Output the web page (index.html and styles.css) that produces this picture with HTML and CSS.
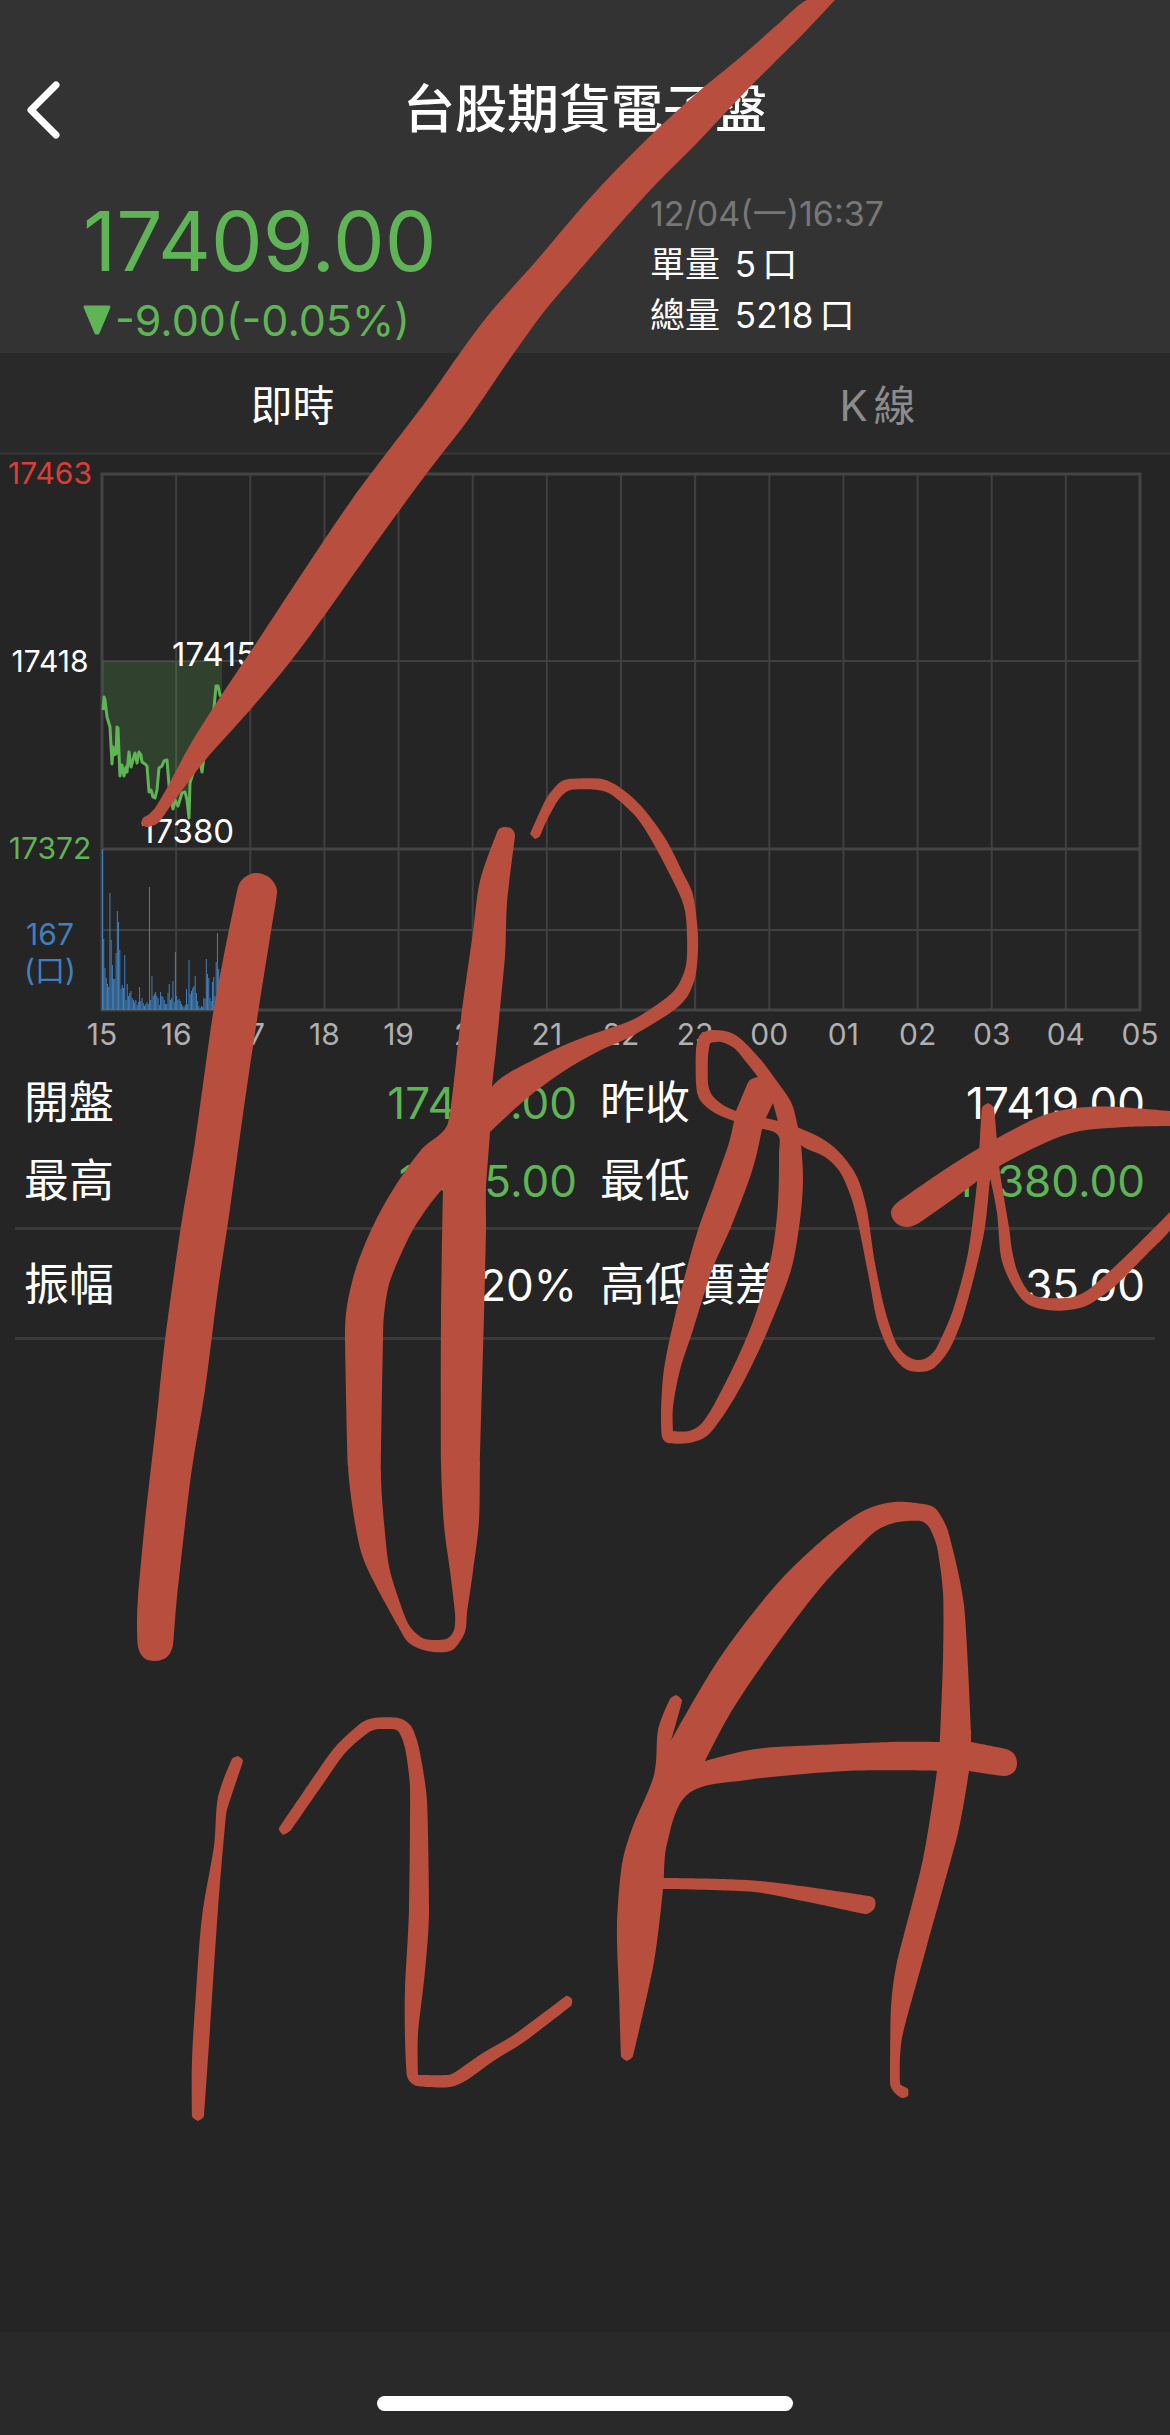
FILE: index.html
```html
<!DOCTYPE html>
<html lang="zh-Hant">
<head>
    <meta charset="UTF-8">
    <meta name="viewport" content="width=device-width, initial-scale=1">
    <title>台股期貨電子盤</title>
    <link rel="stylesheet" href="styles.css">
</head>
<body>
    <header class="header">
        <div class="nav">
            <button class="back" type="button" aria-label="返回">
                <svg viewBox="0 0 34 58" width="34" height="58"><path d="M29 4L4 29L29 54"/></svg>
            </button>
            <h1>台股期貨電子盤</h1>
        </div>
        <div class="quote">
            <div class="quote-price">
                <div class="price">17409.00</div>
                <div class="change"><svg viewBox="0 0 28 30" width="28" height="30"><path d="M2 2H26L15 28H13Z"/></svg>-9.00(-0.05%)</div>
            </div>
            <div class="quote-info">
                <div class="time">12/04(一)16:37</div>
                <div class="lots"><span>單量</span> 5<span>口</span></div>
                <div class="lots"><span>總量</span> 5218<span>口</span></div>
            </div>
        </div>
    </header>
    <nav class="tabs">
        <button class="selected" type="button">即時</button>
        <button type="button">K<span>線</span></button>
    </nav>
    <main>
        <svg class="chart" viewBox="0 0 1170 609">
            <g class="grid"></g>
            <path class="area" d=""/>
            <path class="line" d=""/>
            <g class="volume"></g>
            <g class="axis">
                <text class="up" x="50" y="29">17463</text>
                <text x="50" y="217">17418</text>
                <text class="down" x="50" y="404">17372</text>
                <text class="lot" x="50" y="490">167</text>
                <text class="lot" x="50" y="526">(口)</text>
            </g>
            <g class="mark">
                <text x="172" y="211">17415</text>
                <text x="141" y="388">17380</text>
            </g>
            <g class="hours"></g>
        </svg>
        <table class="stats">
            <tbody>
                <tr>
                    <th>開盤</th><td class="down">17408.00</td>
                    <th>昨收</th><td>17419.00</td>
                </tr>
                <tr>
                    <th>最高</th><td class="down">17415.00</td>
                    <th>最低</th><td class="down">17380.00</td>
                </tr>
            </tbody>
            <tbody class="range">
                <tr>
                    <th>振幅</th><td>0.20%</td>
                    <th>高低價差</th><td>35.00</td>
                </tr>
            </tbody>
        </table>
    </main>
    <footer class="footer"><div class="home"></div></footer>

    <!-- handwritten marks over the page, chart.js rounds their corners -->
    <svg class="ink" viewBox="0 0 1170 2435" aria-hidden="true">
        <path d="M807 0L777 25L737 60L697 93L643 143L590 198L537 260L490 313L460 353L427 400L353 498L303 572L257 642L217 702L190 745L167 788L155 808L148 815L143 818L141 824L147 827L158 823L167 811L180 793L207 758L250 710L290 662L327 612L373 547L427 473L468 420L507 363L543 313L577 273L617 227L657 183L697 143L747 90L802 35L835 0Z"/>
        <path d="M238 887L245 877L257 873L270 878L277 891L272 925L257 1020L245 1100L230 1209L218 1289L205 1390L191 1475L177 1597L173 1645L167 1657L155 1661L144 1658L138 1647L137 1622L138 1597L145 1521L156 1424L165 1340L181 1226L195 1142L212 1020L223 960Z"/>
        <path d="M496 835L499 829L505 827L512 829L515 836L507 903L505 956L496 1050L492 1087L490 1132L486 1189L486 1230L484 1315L480 1462L479 1521L473 1571L467 1613L465 1632L455 1648L446 1652L427 1651L409 1643L398 1626L375 1584L362 1555L354 1517L348 1466L345 1336L347 1306L356 1268L373 1226L394 1188L421 1150L448 1123L461 1018L473 932L480 881Z
            M443 1188L425 1211L409 1237L390 1281L384 1315L383 1340L381 1475L385 1533L390 1571L404 1614L411 1628L425 1639L446 1639L454 1630L455 1613L450 1571L444 1525L441 1462L441 1315Z"/>
        <path d="M492 1087L541 1056L582 1038L632 1020L662 1001L677 987L686 965L687 936L685 911L678 891L657 850L637 818L612 795L597 790L571 790L559 799L546 822L540 836L535 839L530 834L546 799L559 783L569 779L602 779L622 789L642 807L665 838L682 871L693 895L698 936L696 973L687 997L670 1013L632 1036L597 1052L561 1073L526 1099L490 1132Z"/>
        <path d="M734 1121L729 1143L715 1183L697 1233L682 1287L668 1347L663 1377L661 1413L662 1437L668 1443L689 1443L708 1435L727 1410L746 1377L768 1330L791 1270L800 1220L803 1180L801 1145L797 1123L791 1102L776 1080L761 1060L742 1040L729 1032L712 1030L700 1035L696 1050L696 1083L700 1100L715 1113Z
            M710 1043L721 1042L734 1048L747 1063L758 1077L750 1080L746 1087L736 1111L723 1105L712 1095L708 1083L708 1057Z
            M773 1103L778 1121L766 1118Z
            M762 1129L778 1135L779 1153L778 1203L772 1253L757 1310L738 1357L715 1403L702 1423L689 1431L673 1431L673 1407L680 1370L693 1330L712 1270L731 1227L749 1180L757 1153Z"/>
        <path d="M797 1127L821 1138L840 1153L857 1177L867 1210L875 1263L885 1310L896 1343L907 1356L918 1360L928 1357L937 1347L953 1310L968 1253L977 1183L980 1137L982 1108L988 1103L994 1108L997 1140L1000 1173L1009 1227L1012 1250L1018 1273L1030 1293L1047 1298L1073 1297L1092 1287L1129 1253L1170 1212L1170 1230L1148 1253L1114 1287L1088 1305L1069 1310L1047 1310L1026 1303L1011 1283L1001 1257L997 1213L990 1177L985 1227L975 1273L962 1320L949 1350L934 1368L919 1372L904 1368L889 1350L877 1320L868 1273L858 1223L851 1197L840 1172L825 1157L801 1145Z"/>
        <path d="M898 1202L941 1172L981 1147L1032 1120L1058 1111L1088 1107L1118 1107L1170 1111L1170 1126L1126 1127L1080 1131L1047 1142L998 1167L956 1197L919 1223L907 1227L896 1223L891 1212Z"/>
        <path d="M232 1759L238 1756L243 1761L231 1797L226 1815L218 1909L210 2029L204 2116L198 2121L192 2116L192 2060L196 1993L202 1917L214 1846L218 1797Z"/>
        <path d="M279 1828L283 1835L291 1830L323 1784L346 1752L371 1731L387 1729L398 1731L405 1748L410 1788L409 1909L405 1989L405 2038L407 2076L414 2085L428 2087L450 2087L467 2080L495 2060L524 2042L571 2006L572 1999L566 1996L515 2034L483 2053L457 2071L448 2075L418 2075L418 2034L425 1971L429 1913L427 1801L419 1748L411 1726L398 1718L374 1718L361 1723L336 1746L317 1772Z"/>
        <path d="M670 1699L676 1695L682 1701L671 1741L719 1659L776 1585L827 1536L865 1510L894 1502L923 1504L936 1509L948 1531L964 1605L971 1730L971 1742L1006 1749L1014 1754L1017 1763L1014 1772L1004 1776L969 1771L958 1833L926 1949L902 2038L900 2083L908 2089L908 2096L902 2098L894 2092L890 2083L891 2007L897 1962L923 1859L937 1771L846 1771L747 1780L688 1794L667 1844L664 1878L760 1881L869 1896L875 1900L874 1909L865 1914L808 1902L754 1892L663 1889L654 1962L633 2056L627 2061L621 2056L619 1993L617 1926L622 1864L633 1826L654 1775L658 1730Z
            M705 1761L744 1751L776 1747L891 1742L940 1742L943 1659L943 1592L937 1547L929 1527L920 1521L894 1523L872 1534L821 1587L770 1654L731 1712Z"/>
    </svg>
    <script src="chart.js"></script>
</body>
</html>
```

FILE: styles.css
```css
*{
    margin: 0;
    padding: 0;
    border: 0;
    box-sizing: border-box;
}
body{
    position: relative;
    display: flex;
    flex-direction: column;
    min-height: 100vh;
    overflow-x: hidden;
    background-color: #252525;
    color: white;
    font-family: Inter, "Noto Sans CJK TC", sans-serif;
}
button{
    background: none;
    color: inherit;
    font-family: inherit;
    cursor: pointer;
}
.header{
    background-color: #333;
    padding-top: 66px;
}
.nav{
    display: grid;
    grid-template-columns: 1fr auto 1fr;
    align-items: center;
    height: 88px;
}
.nav h1{
    font-size: 52px;
    font-weight: 500;
    line-height: 72px;
}
.back{
    justify-self: start;
    margin-left: 27px;
    height: 58px;
}
.back path{
    fill: none;
    stroke: white;
    stroke-width: 7;
    stroke-linecap: round;
    stroke-linejoin: round;
}
.quote{
    display: grid;
    grid-template-columns: 5fr 4fr;
    padding: 34px 0 9px;
}
.quote-price{
    padding-left: 83px;
    color: #5fb556;
}
.price{
    font-size: 82px;
    line-height: 108px;
}
.change{
    display: flex;
    align-items: center;
    gap: 4px;
    font-size: 43px;
    line-height: 48px;
}
.change path{
    fill: #5fb556;
    stroke: #5fb556;
    stroke-width: 3;
    stroke-linejoin: round;
}
.quote-info{
    font-size: 34px;
    line-height: 51px;
}
.time{
    color: #777;
}
.lots{
    font-size: 35px;
}
.lots span:first-child{
    margin-right: 5px;
}
.lots span:last-child{
    margin-left: 6px;
}
.tabs{
    display: flex;
    height: 102px;
    background-color: #292929;
    border-bottom: 3px solid #333;
}
.tabs button{
    flex: 1;
    font-size: 42px;
    color: #8c8c8c;
}
.tabs .selected{
    color: white;
}
.tabs span{
    margin-left: 6px;
}
main{
    flex: 1;
}
.chart{
    display: block;
    width: 100%;
    font-size: 30px;
}
.grid path{
    fill: none;
    stroke: #404040;
    stroke-width: 2;
}
.grid .frame{
    stroke: #444;
    stroke-width: 3;
}
.area{
    fill: #5fb556;
    fill-opacity: .2;
}
.line{
    fill: none;
    stroke: #5fb556;
    stroke-width: 3;
    stroke-linejoin: round;
}
.volume rect{
    fill: #4180bd;
}
.chart text{
    fill: white;
}
.chart .axis,
.chart .hours{
    text-anchor: middle;
}
.chart .up{
    fill: #e03c36;
}
.chart .down{
    fill: #5fb556;
}
.chart .lot{
    fill: #4180bd;
}
.mark text{
    font-size: 33px;
}
.hours text{
    fill: #b0b0b0;
}
.stats{
    width: calc(100% - 30px);
    margin: 0 15px;
    border-collapse: collapse;
    table-layout: fixed;
    font-size: 44px;
    line-height: 64px;
}
.stats tbody{
    border-bottom: 3px solid #3a3a3a;
}
.stats th{
    padding: 7px 0 7px 9px;
    font-size: 45px;
    font-weight: 400;
    text-align: left;
    white-space: nowrap;
}
.stats td{
    padding: 7px 8px 7px 0;
    text-align: right;
}
.stats td:last-child{
    padding-right: 10px;
}
.stats td + th{
    padding-left: 15px;
}
.stats tr:last-child th,
.stats tr:last-child td{
    padding-bottom: 14px;
}
.stats .range tr th,
.stats .range tr td{
    padding-top: 23px;
    padding-bottom: 20px;
}
.stats .down{
    color: #5fb556;
}
.footer{
    display: flex;
    justify-content: center;
    align-items: flex-end;
    height: 103px;
    padding-bottom: 24px;
    background-color: #292929;
}
.home{
    width: 416px;
    height: 15px;
    border-radius: 8px;
    background-color: white;
}
.ink{
    position: absolute;
    top: 0;
    left: 0;
    width: 100%;
    fill: #b84e3d;
    fill-rule: evenodd;
    pointer-events: none;
}
```

FILE: chart.js
```javascript
var NS = "http://www.w3.org/2000/svg";
var left = 102, right = 1140, top0 = 19, mid = 206, low = 394, half = 475, bottom = 555;
var hourWidth = (right - left) / 14;
var hours = ["15", "16", "17", "18", "19", "20", "21", "22", "23", "00", "01", "02", "03", "04", "05"];

// x, y of the price line
var prices = [
    [103, 255], [104, 242], [105, 245], [107, 262], [110, 272], [112, 309], [113, 292], [114, 300], [116, 299],
    [117, 272], [118, 273], [119, 298], [120, 321], [122, 310], [124, 321], [126, 312], [127, 317], [129, 297],
    [131, 312], [135, 298], [137, 308], [139, 297], [141, 300], [142, 307], [145, 309], [147, 311], [149, 337],
    [151, 335], [153, 342], [155, 343], [157, 335], [159, 313], [162, 311], [164, 306], [167, 305], [169, 330],
    [173, 354], [175, 345], [178, 351], [182, 338], [185, 337], [187, 345], [189, 363], [190, 328], [193, 318],
    [196, 310], [199, 300], [202, 317], [205, 295], [214, 253], [216, 231], [218, 231], [220, 240], [222, 243]
];
// bar heights, one a minute
var volumes = [
    161, 71, 42, 32, 26, 23, 117, 70, 45, 31, 31, 57, 99, 88, 60, 21, 25, 22, 55, 10,
    26, 14, 17, 19, 12, 10, 8, 10, 5, 8, 23, 9, 12, 7, 4, 6, 8, 6, 123, 10,
    34, 14, 16, 18, 14, 12, 5, 18, 14, 13, 10, 6, 6, 17, 26, 10, 12, 29, 8, 58,
    14, 10, 11, 9, 6, 4, 3, 5, 21, 6, 50, 16, 19, 22, 24, 34, 17, 9, 4, 2,
    4, 3, 12, 11, 51, 36, 32, 12, 9, 28, 33, 14, 48, 77, 41, 30, 20
];

function add(parent, name, attrs){
    var el = document.createElementNS(NS, name);
    for(var key in attrs){
        el.setAttribute(key, attrs[key]);
    }
    document.querySelector(parent).appendChild(el);
    return el;
}

for(var i = 0; i < hours.length; i++){
    var x = left + i * hourWidth;
    add(".grid", "path", {d: "M" + x + " " + top0 + "V" + bottom});
    add(".hours", "text", {x: x, y: 590}).textContent = hours[i];
}
add(".grid", "path", {d: "M" + left + " " + mid + "H" + right});
add(".grid", "path", {d: "M" + left + " " + half + "H" + right});
add(".grid", "path", {"class": "frame", d: "M" + left + " " + top0 + "H" + right + "V" + bottom + "H" + left + "ZM" + left + " " + low + "H" + right});

var line = "M" + prices.join("L");
document.querySelector(".line").setAttribute("d", line);
document.querySelector(".area").setAttribute("d", line + "V" + mid + "H" + left + "Z");

for(i = 0; i < volumes.length; i++){
    add(".volume", "rect", {x: left + i * hourWidth / 60, y: bottom - volumes[i], width: 1, height: volumes[i]});
}

function dist(a, b){
    return Math.hypot(b[0] - a[0], b[1] - a[1]);
}
// handle of the curve at b, none where a-b-c is a sharp corner
function handle(a, b, c){
    var inLen = dist(a, b), outLen = dist(b, c);
    var dot = (b[0] - a[0]) * (c[0] - b[0]) + (b[1] - a[1]) * (c[1] - b[1]);
    if(dot / (inLen * outLen) < 0.4){
        return [0, 0];
    }
    // never longer than the shorter side allows
    var k = Math.min(inLen, outLen) / 3 / dist(a, c);
    return [(c[0] - a[0]) * k, (c[1] - a[1]) * k];
}
function smooth(part){
    var nums = part.match(/\d+/g).map(Number), p = [];
    for(var i = 0; i < nums.length; i += 2){
        p.push([nums[i], nums[i + 1]]);
    }
    var n = p.length;
    var h = p.map(function(b, i){
        return handle(p[(i + n - 1) % n], b, p[(i + 1) % n]);
    });
    var d = "M" + p[0];
    for(i = 0; i < n; i++){
        var a = p[i], b = p[(i + 1) % n], ha = h[i], hb = h[(i + 1) % n];
        d += "C" + [a[0] + ha[0], a[1] + ha[1], b[0] - hb[0], b[1] - hb[1], b[0], b[1]];
    }
    return d + "Z";
}
document.querySelectorAll(".ink path").forEach(function(path){
    var parts = path.getAttribute("d").match(/M[^Z]+/g);
    path.setAttribute("d", parts.map(smooth).join(""));
});
```
